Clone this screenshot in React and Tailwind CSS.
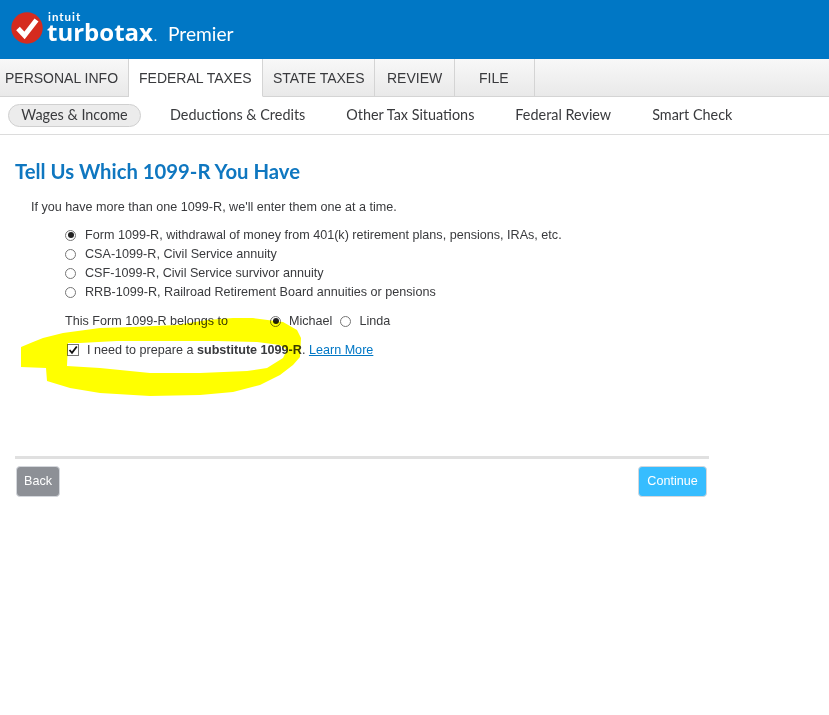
import { useState } from "react";

const tabs = [
    { label: "PERSONAL INFO", width: "w-[129px]", pad: "pl-[5px]" },
    { label: "FEDERAL TAXES", width: "w-[134px]", active: true, pad: "pl-[10px]" },
    { label: "STATE TAXES", width: "w-[112px]", pad: "pl-[10px]" },
    { label: "REVIEW", width: "w-[80px]", pad: "pl-[12px]" },
    { label: "FILE", width: "w-[80px]", pad: "pl-[24px]" },
];

const subTabs = ["Deductions & Credits", "Other Tax Situations", "Federal Review", "Smart Check"];

const forms = [
    "Form 1099-R, withdrawal of money from 401(k) retirement plans, pensions, IRAs, etc.",
    "CSA-1099-R, Civil Service annuity",
    "CSF-1099-R, Civil Service survivor annuity",
    "RRB-1099-R, Railroad Retirement Board annuities or pensions",
];

function Radio({ checked }) {
    return (
        <span className="w-[11px] h-[11px] rounded-full border border-[#767676] bg-white flex items-center justify-center shrink-0">
            {checked && <span className="w-[6px] h-[6px] rounded-full bg-[#222]"></span>}
        </span>
    );
}

function Logo() {
    return (
        <div className="flex items-start h-[59px] text-white pl-[11px] pt-[12px]">
            <svg width="32" height="32" viewBox="0 0 32 32" className="shrink-0">
                <circle cx="16" cy="16" r="15.7" fill="#d52b1e" />
                <path d="M7 16.5 L13.5 23.5 L25.5 8" fill="none" stroke="#fff" strokeWidth="5" strokeLinejoin="miter" />
            </svg>
            <div className="ml-[4px] flex flex-col w-[121px]">
                <span className="h-[9px] pl-[1px] text-[11.5px] leading-[9px] font-bold tracking-[1px] font-['Lato',sans-serif]">intuit</span>
                <span className="h-[22px] text-[24px] leading-[22px] font-bold font-['Open_Sans',sans-serif]">
                    turbotax<span className="text-[10px] ml-[1px]">.</span>
                </span>
            </div>
            <span className="mt-[11px] text-[19.2px] leading-[22px] font-['Lato',sans-serif]">Premier</span>
        </div>
    );
}

export default function App() {
    const [owner, setOwner] = useState("Michael");

    return (
        <div className="relative min-h-[715px] bg-white text-[#393a3d] font-['Liberation_Sans',Arial,sans-serif]">
            {/* HEADER */}
            <div className="bg-[#0077c5]">
                <Logo />
            </div>

            {/* MAIN TABS */}
            <div className="flex h-[38px] bg-gradient-to-b from-[#f8f8f8] to-[#e9e9e9] border-b border-[#d4d4d4]">
                {tabs.map((t) => (
                    <div
                        key={t.label}
                        className={`${t.width} ${t.pad} h-[38px] flex items-center text-[14px] border-r border-[#d4d4d4] ${t.active ? "bg-white border-b border-b-white pt-[2px]" : ""}`}
                    >
                        {t.label}
                    </div>
                ))}
            </div>

            {/* SUB NAV */}
            <div className="flex items-center h-[38px] border-b border-[#dcdcdc] pl-[8px] text-[14.4px] font-['Lato',sans-serif]">
                <div className="w-[133px] h-[23px] pb-[2px] flex items-center justify-center rounded-full border border-[#d0d0d0] bg-[#ececec]">
                    Wages &amp; Income
                </div>
                <div className="flex gap-[41px] ml-[29px] -translate-y-[1px]">
                    {subTabs.map((s) => (
                        <span key={s}>{s}</span>
                    ))}
                </div>
            </div>

            {/* CONTENT */}
            <div className="w-[694px] ml-[15px] pt-[23px]">
                <h1 className="text-[20.3px] leading-[26px] font-bold text-[#0f77c0] font-['Lato',sans-serif]">
                    Tell Us Which 1099-R You Have
                </h1>

                <p className="mt-[15px] ml-[16px] text-[12.6px] leading-[16px]">
                    If you have more than one 1099-R, we'll enter them one at a time.
                </p>

                <div className="mt-[12px] ml-[50px] flex flex-col gap-[3px] text-[12.6px]">
                    {forms.map((f, i) => (
                        <label key={f} className="flex items-center gap-[9px] h-[16px]">
                            <Radio checked={i === 0} />
                            {f}
                        </label>
                    ))}
                </div>

                <div className="mt-[13px] ml-[50px] flex items-center h-[16px] text-[12.6px]">
                    <span className="w-[205px]">This Form 1099-R belongs to</span>
                    <button className="flex items-center gap-[8px]" onClick={() => setOwner("Michael")}>
                        <Radio checked={owner === "Michael"} />
                        Michael
                    </button>
                    <button className="flex items-center gap-[8px] ml-[8px]" onClick={() => setOwner("Linda")}>
                        <Radio checked={owner === "Linda"} />
                        Linda
                    </button>
                </div>

                <div className="mt-[13px] ml-[52px] flex items-center h-[16px] text-[12.6px]">
                    <span className="relative w-[12px] h-[12px] border border-[#767676] bg-white shrink-0">
                        <svg width="10" height="10" viewBox="0 0 10 10" className="absolute left-0 top-0">
                            <path d="M1.5 5 L4 7.8 L8.8 1.5" fill="none" stroke="#111" strokeWidth="1.8" />
                        </svg>
                    </span>
                    <span className="ml-[8px]">
                        I need to prepare a <b>substitute 1099-R</b>.{" "}
                        <a href="#learn" className="text-[#0077c5] underline">Learn More</a>
                    </span>
                </div>

                {/* FOOTER BUTTONS */}
                <div className="mt-[98px] border-t-[3px] border-[#e0e0e0] pt-[7px] pl-[1px] pr-[2px] flex justify-between">
                    <button className="w-[44px] h-[31px] rounded-[4px] bg-[#8d9096] border border-[#d4d7dc] text-white text-[12.6px]">Back</button>
                    <button className="w-[69px] h-[31px] rounded-[4px] bg-[#36bdff] border border-[#d4d7dc] text-white text-[12.6px]">Continue</button>
                </div>
            </div>

            {/* yellow marker scribble */}
            <svg width="829" height="715" className="absolute left-0 top-0 pointer-events-none mix-blend-multiply">
                <path
                    fillRule="evenodd"
                    fill="#ffff00"
                    d="M21 347 L33 342 L43 338 L63 333 L100 328 L133 327 L177 325 L207 320 L233 318 L253 318 L283 322 L297 330 L301 338 L300 357 L293 365 L280 375 L260 385 L233 392 L200 395 L150 396 L100 393 L70 388 L47 381 L46 368 L21 367 Z M80 343 L117 341 L167 341 L217 341 L257 342 L280 345 L287 350 L283 358 L267 368 L247 371 L200 373 L150 373 L100 368 L67 366 L68 343 Z"
                />
            </svg>
        </div>
    );
}
